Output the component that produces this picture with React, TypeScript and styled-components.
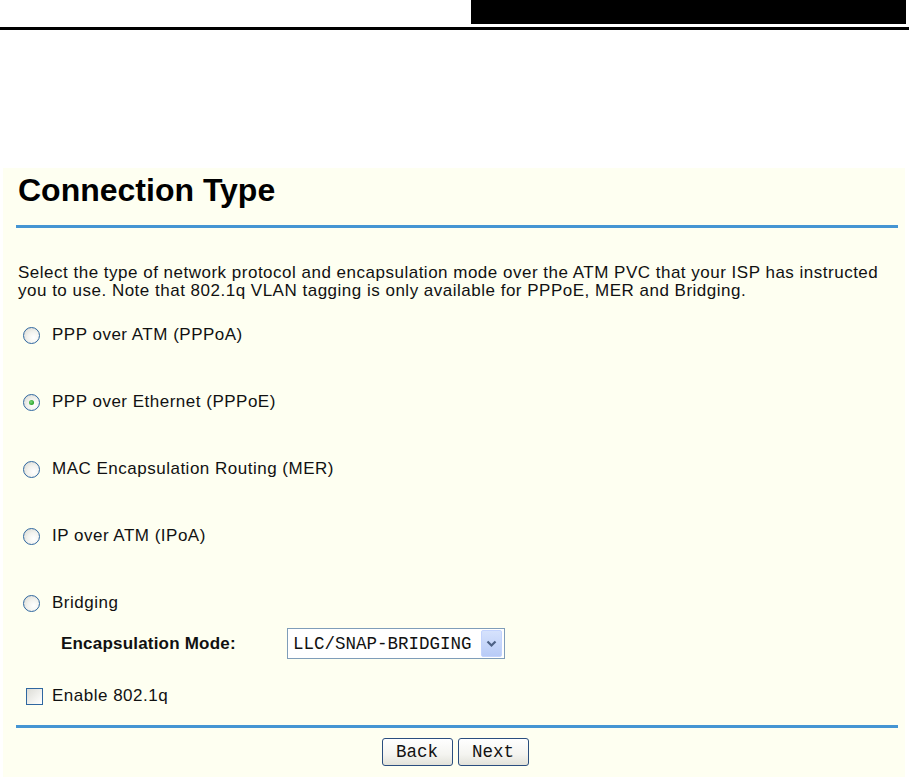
import styled, { createGlobalStyle } from "styled-components"

const Global = createGlobalStyle`
    html, body {
        margin: 0;
        padding: 0;
        background: #FFFFFF;
    }
    body {
        font-family: "Liberation Sans", Arial, sans-serif;
        color: #000000;
    }
`

const options = [
    { id: "pppoa", label: "PPP over ATM (PPPoA)" },
    { id: "pppoe", label: "PPP over Ethernet (PPPoE)" },
    { id: "mer", label: "MAC Encapsulation Routing (MER)" },
    { id: "ipoa", label: "IP over ATM (IPoA)" },
    { id: "bridge", label: "Bridging" },
]

function App() {
    return (
        <>
            <Global />
            <Page>
                <TopBar>
                    <TitleBlock />
                </TopBar>
                <Rule />

                <Panel>
                    <Heading>Connection Type</Heading>
                    <Divider $gap={17} />

                    <Intro>
                        Select the type of network protocol and encapsulation mode over the ATM PVC that your ISP has instructed
                        <br />
                        you to use. Note that 802.1q VLAN tagging is only available for PPPoE, MER and Bridging.
                    </Intro>

                    <OptionList>
                        {options.map((o) => (
                            <OptionRow key={o.id}>
                                <Radio type="radio" name="conn" value={o.id} defaultChecked={o.id === "pppoe"} />
                                <OptionLabel>{o.label}</OptionLabel>
                            </OptionRow>
                        ))}
                    </OptionList>

                    <ModeRow>
                        <ModeLabel>Encapsulation Mode:</ModeLabel>
                        <SelectBox>
                            <SelectValue>LLC/SNAP-BRIDGING</SelectValue>
                            <SelectArrow>
                                <svg width="11" height="8" viewBox="0 0 11 8">
                                    <path d="M1.5 1.5 L5.5 5.5 L9.5 1.5" fill="none" stroke="#4D6185" strokeWidth="2.2" />
                                </svg>
                            </SelectArrow>
                        </SelectBox>
                    </ModeRow>

                    <CheckRow>
                        <Check type="checkbox" />
                        <OptionLabel>Enable 802.1q</OptionLabel>
                    </CheckRow>

                    <Divider $gap={19} />

                    <ButtonBar>
                        <Button>Back</Button>
                        <Button>Next</Button>
                    </ButtonBar>
                </Panel>
            </Page>
        </>
    );
}

const Page = styled.div`
    width: 909px;
    height: 777px;
    overflow: hidden;
    display: flex;
    flex-direction: column;
`

const TopBar = styled.div`
    display: flex;
    justify-content: flex-end;
    padding-right: 3px;
`

const TitleBlock = styled.div`
    width: 435px;
    height: 24px;
    background-color: #000000;
`

const Rule = styled.div`
    height: 3px;
    margin-top: 3px;
    background-color: #000000;
`

const Panel = styled.div`
    margin: 138px 4px 0 3px;
    flex: 1;
    background-color: #FEFFF1;
    padding: 4px 7px 0 13px;
    display: flex;
    flex-direction: column;
`

const Heading = styled.h1`
    margin: 0 0 0 2px;
    font-size: 32px;
    line-height: 36px;
    font-weight: 700;
    color: #000000;
`

const Divider = styled.div<{ $gap: number }>`
    height: 3px;
    margin-top: ${(p) => p.$gap}px;
    background-color: #4595D3;
`

const Intro = styled.p`
    margin: 36px 0 0 2px;
    font-size: 17px;
    letter-spacing: 0.5px;
    line-height: 18px;
    white-space: nowrap;
    color: #111111;
`

const OptionList = styled.div`
    display: flex;
    flex-direction: column;
    row-gap: 47px;
    margin-top: 25px;
`

const OptionRow = styled.label`
    height: 20px;
    display: flex;
    align-items: center;
    padding-left: 7px;
`

const Radio = styled.input`
    appearance: none;
    margin: 0 12px 0 0;
    width: 17px;
    height: 17px;
    border-radius: 50%;
    border: 1.5px solid #2F67A0;
    background: radial-gradient(circle at 65% 65%, #FFFFFF 0%, #F2F2EE 45%, #D4D4CD 100%);
    box-sizing: border-box;
    display: flex;
    align-items: center;
    justify-content: center;
    flex-shrink: 0;

    &:checked::after {
        content: "";
        width: 5px;
        height: 5px;
        border-radius: 50%;
        background: radial-gradient(circle at 40% 40%, #7DDB7D 0%, #27A127 70%);
    }
`

const OptionLabel = styled.span`
    font-size: 17px;
    letter-spacing: 0.5px;
    color: #111111;
`

const ModeRow = styled.div`
    display: flex;
    align-items: center;
    margin-top: 15px;
    padding-left: 45px;
`

const ModeLabel = styled.span`
    width: 226px;
    font-size: 17px;
    letter-spacing: 0.2px;
    font-weight: 700;
    color: #111111;
`

const SelectBox = styled.div`
    width: 218px;
    height: 31px;
    box-sizing: border-box;
    border: 1px solid #7F9DB9;
    background-color: #FFFFFF;
    display: flex;
    align-items: center;
    justify-content: space-between;
    padding: 0 2px 0 5px;
`

const SelectValue = styled.span`
    font-family: "Liberation Mono", "Courier New", monospace;
    font-size: 17.5px;
    color: #111111;
`

const SelectArrow = styled.div`
    width: 21px;
    height: 27px;
    box-sizing: border-box;
    border: 1px solid #C3D3FD;
    border-radius: 2px;
    background: linear-gradient(#D6E2FC, #B8CBF7);
    display: flex;
    align-items: center;
    justify-content: center;
`

const CheckRow = styled.label`
    height: 20px;
    display: flex;
    align-items: center;
    margin-top: 27px;
    padding-left: 10px;
`

const Check = styled.input`
    appearance: none;
    margin: 0 9px 0 0;
    width: 17px;
    height: 17px;
    box-sizing: border-box;
    border: 1.5px solid #2F67A0;
    background: linear-gradient(135deg, #DCDCD6, #F6F6F3 70%, #FFFFFF);
    flex-shrink: 0;
`

const ButtonBar = styled.div`
    display: flex;
    justify-content: center;
    column-gap: 5px;
    margin-top: 10px;
    padding-right: 4px;
`

const Button = styled.button`
    width: 71px;
    height: 28px;
    padding: 0;
    border: 1px solid #2A4E7F;
    border-radius: 3px;
    background: linear-gradient(#FFFFFF, #F4F4F0 60%, #E2E2DA);
    font-family: "Liberation Mono", "Courier New", monospace;
    font-size: 17.5px;
    color: #111111;
`

export default App;
